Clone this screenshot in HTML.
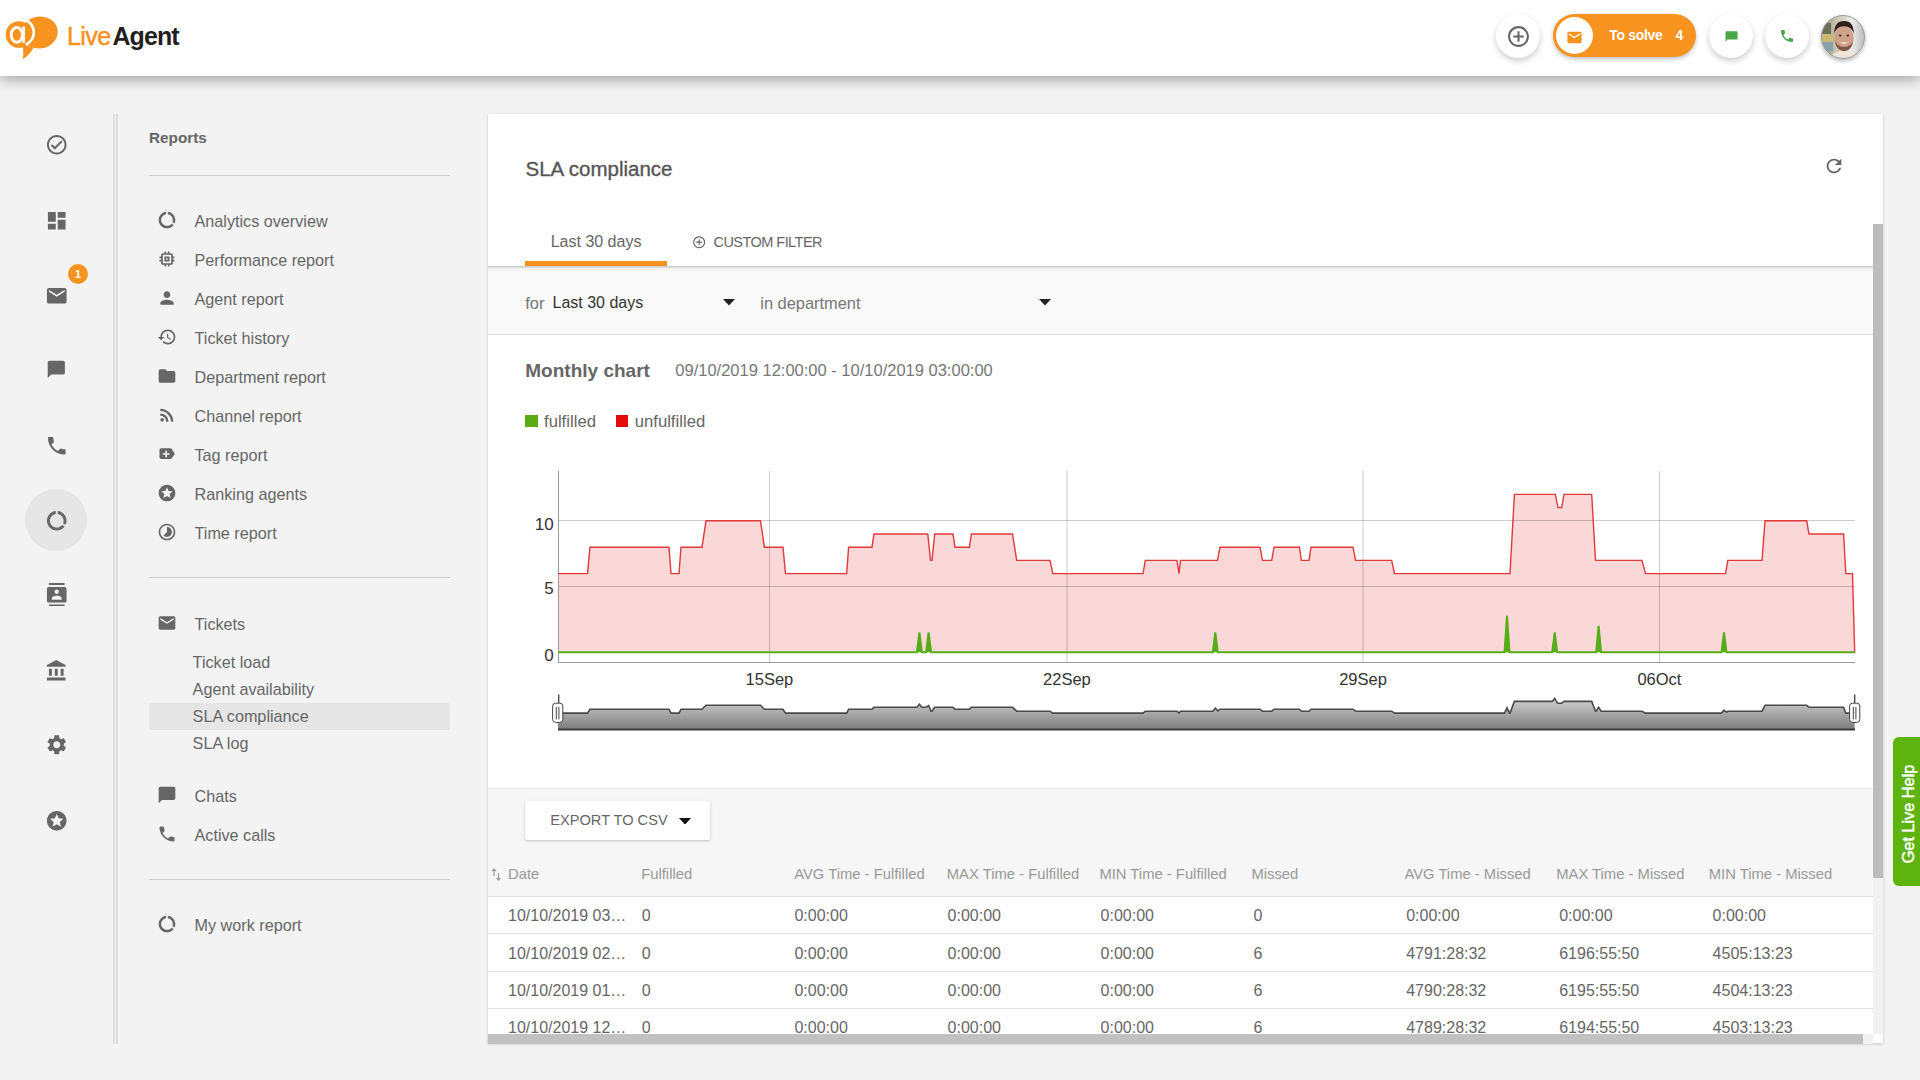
<!DOCTYPE html>
<html><head><meta charset="utf-8">
<style>
*{box-sizing:border-box;margin:0;padding:0}
html,body{width:1920px;height:1080px;overflow:hidden}
body{background:#f3f3f3;font-family:"Liberation Sans",sans-serif;color:#666;position:relative}
.abs{position:absolute}
svg.i{position:absolute;fill:#666}
#hdr{position:absolute;left:0;top:0;width:1920px;height:76px;background:#fff;box-shadow:0 4px 13px rgba(0,0,0,.32);z-index:5}
.cbtn{position:absolute;width:44px;height:44px;border-radius:50%;background:#fff;box-shadow:0 3px 6px rgba(0,0,0,.2)}
#rail svg{position:absolute;fill:#666}
.divl{position:absolute;left:113px;top:114px;width:5px;height:930px;border-left:2px solid #dcdcdc;border-right:2px solid #dcdcdc}
.side{position:absolute;font-size:16.2px;line-height:1;color:#666;white-space:nowrap}
.hr{position:absolute;left:149px;width:301px;height:1px;background:#cfcfcf}
#card{position:absolute;left:488px;top:114px;width:1395px;height:929px;background:#fff;box-shadow:0 1px 3px rgba(0,0,0,.2)}
.t{position:absolute;white-space:nowrap}
.th{position:absolute;top:866.5px;font-size:14.8px;line-height:1;color:#999;white-space:nowrap}
.td{position:absolute;font-size:16px;line-height:1;color:#666;white-space:nowrap}
</style></head><body>

<div id="hdr">
  <svg class="abs" style="left:0;top:0" width="64" height="64" viewBox="0 0 64 64">
    <ellipse cx="39.5" cy="32.5" rx="18.3" ry="16" transform="rotate(-8 39.5 32.5)" fill="#f7931e"/>
    <path d="M22 44 Q24.5 53 22.5 59.5 Q30 55 33.5 47.5 Z" fill="#f7931e"/>
    <circle cx="19" cy="34.5" r="13.3" fill="#f7931e"/>
    <path d="M21 18.8 A13.6 13.6 0 0 1 25.8 44.8" fill="none" stroke="#fff" stroke-width="2.6"/>
    <ellipse cx="16.8" cy="34.8" rx="5.6" ry="7.4" fill="none" stroke="#fff" stroke-width="2.9"/>
    <path d="M23.6 26.5 V43" stroke="#fff" stroke-width="2.6"/>
  </svg>
  <div class="t" style="left:67px;top:22px;font-size:25px;line-height:normal"><span style="color:#f7931e;-webkit-text-stroke:0.5px #f7931e;letter-spacing:-0.6px">Live</span><span style="color:#231f20;font-weight:bold;letter-spacing:-0.9px;margin-left:2px">Agent</span></div>

  <div class="cbtn" style="left:1496px;top:14px"></div>
  <svg class="i" style="left:1505.7px;top:23.8px" width="25" height="25" viewBox="0 0 24 24"><path d="M13 7h-2v4H7v2h4v4h2v-4h4v-2h-4V7zm-1-5C6.48 2 2 6.48 2 12s4.48 10 10 10 10-4.48 10-10S17.52 2 12 2zm0 18c-4.41 0-8-3.59-8-8s3.59-8 8-8 8 3.59 8 8-3.59 8-8 8z"/></svg>

  <div class="abs" style="left:1553px;top:14px;width:143px;height:43px;border-radius:22px;background:#f7931e;box-shadow:0 2px 4px rgba(0,0,0,.25)"></div>
  <div class="abs" style="left:1556px;top:17px;width:37px;height:37px;border-radius:50%;background:#fff"></div>
  <svg class="i" style="left:1566.2px;top:28.7px;fill:#f7931e" width="17" height="17" viewBox="0 0 24 24"><path d="M20 4H4c-1.1 0-1.99.9-1.99 2L2 18c0 1.1.9 2 2 2h16c1.1 0 2-.9 2-2V6c0-1.1-.9-2-2-2zm0 4l-8 5-8-5V6l8 5 8-5v2z"/></svg>
  <div class="t" style="left:1609.2px;top:27.5px;font-size:14px;line-height:1;font-weight:bold;color:#fff;letter-spacing:-0.3px">To solve</div><div class="t" style="left:1675.6px;top:27.5px;font-size:14px;line-height:1;font-weight:bold;color:#fff">4</div>

  <div class="cbtn" style="left:1709px;top:14px"></div>
  <svg class="abs" style="left:1724.5px;top:30.5px" width="13" height="11" viewBox="0 0 13 11"><path d="M0.5 1.2Q0.5 0.3 1.4 0.3H11.8Q12.6 0.3 12.6 1.2V7.6Q12.6 8.5 11.8 8.5H2.6L0.5 10.7Z" fill="#46a84a"/></svg>
  <div class="cbtn" style="left:1765px;top:14px"></div>
  <svg class="i" style="left:1779px;top:28px;fill:#46a84a" width="16" height="16" viewBox="0 0 24 24"><path d="M6.62 10.79c1.44 2.83 3.76 5.14 6.59 6.59l2.2-2.2c.27-.27.67-.36 1.02-.24 1.12.37 2.33.57 3.57.57.55 0 1 .45 1 1V20c0 .55-.45 1-1 1-9.39 0-17-7.61-17-17 0-.55.45-1 1-1h3.5c.55 0 1 .45 1 1 0 1.25.2 2.45.57 3.57.11.35.03.74-.25 1.02l-2.2 2.2z"/></svg>
  <div class="abs" style="left:1821px;top:14.8px;width:44px;height:44px;border-radius:50%;box-shadow:0 2px 4px rgba(0,0,0,.3)"></div>
  <svg class="abs" style="left:1821px;top:14.8px" width="44" height="44" viewBox="0 0 44 44">
    <defs><clipPath id="avc"><circle cx="22" cy="22" r="21.5"/></clipPath>
    <linearGradient id="avbg" x1="0" y1="0" x2="1" y2="0"><stop offset="0" stop-color="#8c8a6a"/><stop offset="0.35" stop-color="#c9c5b0"/><stop offset="0.7" stop-color="#ececea"/><stop offset="1" stop-color="#b9b9b9"/></linearGradient></defs>
    <g clip-path="url(#avc)">
      <rect width="44" height="44" fill="url(#avbg)"/>
      <rect x="0" y="8" width="10" height="12" fill="#6b6f58"/>
      <rect x="1" y="19" width="11" height="9" fill="#c8b96e"/>
      <rect x="0" y="27" width="12" height="9" fill="#8aa0ad"/>
      <path d="M8 44 Q11 36 23 35.5 Q34 36 37 44Z" fill="#ede6d8"/>
      <ellipse cx="23" cy="23.5" rx="9.6" ry="12.8" fill="#d0a088"/>
      <path d="M13.2 19 Q13 6 23 6 Q33 6 32.8 19 Q31 11.5 23 11.2 Q15 11.5 13.2 19Z" fill="#2e211a"/>
      <path d="M13.8 25 Q15 35.8 23 36.3 Q31 35.8 32.2 25 Q30.5 31.8 23 32 Q15.5 31.8 13.8 25Z" fill="#7a5646"/>
      <path d="M18.5 27 Q23 30.5 27.5 27 Q23 28.2 18.5 27Z" fill="#fff"/>
      <ellipse cx="19.2" cy="20.5" rx="1.3" ry="0.9" fill="#3b2a20"/><ellipse cx="26.8" cy="20.5" rx="1.3" ry="0.9" fill="#3b2a20"/>
    </g>
    <circle cx="22" cy="22" r="21.5" fill="none" stroke="#9a9a9a" stroke-width="1"/>
  </svg>
</div>

<div id="rail">
  <div class="abs" style="left:25.3px;top:489px;width:62px;height:62px;border-radius:50%;background:#e6e6e6"></div>
  <svg style="left:44.85px;top:133.45px" width="23.5" height="23.5" viewBox="0 0 24 24"><path d="M12 2C6.48 2 2 6.48 2 12s4.48 10 10 10 10-4.48 10-10S17.52 2 12 2zm0 18c-4.41 0-8-3.59-8-8s3.59-8 8-8 8 3.59 8 8-3.59 8-8 8zm4.59-12.42L10 14.17l-2.59-2.58L6 13l4 4 8-8z"/></svg>
  <svg style="left:44.85px;top:208.55px" width="23.5" height="23.5" viewBox="0 0 24 24"><path d="M3 13h8V3H3v10zm0 8h8v-6H3v6zm10 0h8V11h-8v10zm0-18v6h8V3h-8z"/></svg>
  <svg style="left:44.85px;top:283.55px" width="23.5" height="23.5" viewBox="0 0 24 24"><path d="M20 4H4c-1.1 0-1.99.9-1.99 2L2 18c0 1.1.9 2 2 2h16c1.1 0 2-.9 2-2V6c0-1.1-.9-2-2-2zm0 4l-8 5-8-5V6l8 5 8-5v2z"/></svg>
  <div class="abs" style="left:68px;top:264px;width:20px;height:20px;border-radius:50%;background:#f7931e;color:#fff;font-size:11px;font-weight:bold;text-align:center;line-height:20px">1</div>
  <svg style="left:46.2px;top:359px" width="20.6" height="20.6" viewBox="0 0 24 24"><path d="M20 2H4c-1.1 0-1.99.9-1.99 2L2 22l4-4h14c1.1 0 2-.9 2-2V4c0-1.1-.9-2-2-2z"/></svg>
  <svg style="left:44.85px;top:433.55px" width="23.5" height="23.5" viewBox="0 0 24 24"><path d="M6.62 10.79c1.44 2.830 3.76 5.14 6.59 6.59l2.2-2.2c.27-.27.67-.36 1.02-.24 1.12.37 2.33.57 3.57.57.55 0 1 .45 1 1V20c0 .55-.45 1-1 1-9.39 0-17-7.61-17-17 0-.55.45-1 1-1h3.5c.55 0 1 .45 1 1 0 1.25.2 2.45.57 3.57.11.35.03.74-.25 1.02l-2.2 2.2z"/></svg>
  <svg style="left:44.85px;top:508.65px" width="23.5" height="23.5" viewBox="0 0 24 24"><path d="M13 2.05v3.03c3.39.49 6 3.39 6 6.92 0 .9-.18 1.750-.48 2.54l2.6 1.53c.56-1.24.88-2.62.88-4.07 0-5.18-3.95-9.45-9-9.95zM12 19c-3.87 0-7-3.13-7-7 0-3.53 2.61-6.430 6-6.92V2.05c-5.06.5-9 4.76-9 9.95 0 5.52 4.47 10 9.990 10 3.31 0 6.24-1.61 8.06-4.09l-2.6-1.53C16.17 17.98 14.21 19 12 19z"/></svg>
  <svg style="left:44.85px;top:582.55px" width="23.5" height="23.5" viewBox="0 0 24 24"><path d="M20 0H4v2h16V0zM4 24h16v-2H4v2zM20 4H4c-1.1 0-2 .9-2 2v12c0 1.1.9 2 2 2h16c1.1 0 2-.9 2-2V6c0-1.1-.9-2-2-2zm-8 2.75c1.24 0 2.25 1.01 2.25 2.25s-1.01 2.25-2.25 2.25S9.75 10.24 9.75 9 10.76 6.75 12 6.75zM17 17H7v-1.5c0-1.67 3.33-2.5 5-2.5s5 .83 5 2.5V17z"/></svg>
  <svg style="left:44.85px;top:658.65px" width="23.5" height="23.5" viewBox="0 0 24 24"><path d="M4 10v7h3v-7H4zm6 0v7h3v-7h-3zM2 22h19v-3H2v3zm14-12v7h3v-7h-3zm-4.5-9L2 6v2h19V6l-9.5-5z"/></svg>
  <svg style="left:44.85px;top:733.15px" width="23.5" height="23.5" viewBox="0 0 24 24"><path d="M19.14 12.94c.04-.3.06-.61.06-.94 0-.32-.02-.64-.07-.94l2.03-1.58c.18-.14.23-.41.12-.61l-1.92-3.32c-.12-.22-.37-.29-.59-.22l-2.39.96c-.5-.38-1.03-.7-1.62-.94l-.36-2.54c-.04-.24-.24-.41-.48-.41h-3.84c-.24 0-.43.17-.47.41l-.36 2.54c-.59.24-1.13.57-1.62.94l-2.39-.96c-.22-.08-.47 0-.59.22L2.74 8.87c-.12.21-.08.47.12.61l2.03 1.58c-.05.3-.09.63-.09.94s.02.64.07.94l-2.030 1.58c-.18.14-.23.41-.12.61l1.92 3.32c.12.22.37.29.59.22l2.39-.96c.5.38 1.03.7 1.62.94l.36 2.54c.05.24.24.41.48.41h3.84c.24 0 .44-.17.47-.41l.36-2.54c.59-.24 1.13-.56 1.62-.94l2.39.96c.22.08.47 0 .59-.22l1.92-3.32c.12-.22.07-.47-.12-.61l-2.01-1.58zM12 15.6c-1.98 0-3.6-1.62-3.6-3.6s1.62-3.6 3.6-3.6 3.6 1.62 3.6 3.6-1.62 3.6-3.6 3.6z"/></svg>
  <svg style="left:44.85px;top:808.75px" width="23.5" height="23.5" viewBox="0 0 24 24"><path d="M11.99 2C6.47 2 2 6.48 2 12s4.47 10 9.99 10C17.52 22 22 17.520 22 12S17.52 2 11.99 2zm4.24 16L12 15.45 7.77 18l1.12-4.81-3.73-3.23 4.92-.42L12 5l1.92 4.53 4.92.42-3.73 3.23L16.23 18z"/></svg>
</div>
<div class="divl"></div>

<!-- SIDEBAR -->
<div class="side" style="left:149px;top:130.3px;font-weight:bold;font-size:15.3px">Reports</div>
<div class="hr" style="top:175px"></div>
<div class="side" style="left:194.5px;top:213px">Analytics overview</div>
<div class="side" style="left:194.5px;top:251.9px">Performance report</div>
<div class="side" style="left:194.5px;top:290.7px">Agent report</div>
<div class="side" style="left:194.5px;top:329.7px">Ticket history</div>
<div class="side" style="left:194.5px;top:368.7px">Department report</div>
<div class="side" style="left:194.5px;top:407.7px">Channel report</div>
<div class="side" style="left:194.5px;top:446.7px">Tag report</div>
<div class="side" style="left:194.5px;top:485.7px">Ranking agents</div>
<div class="side" style="left:194.5px;top:524.7px">Time report</div>
<svg class="i" style="left:156.5px;top:210.2px" width="20" height="20" viewBox="0 0 24 24"><path d="M13 2.05v3.03c3.39.49 6 3.39 6 6.92 0 .9-.18 1.75-.48 2.54l2.6 1.53c.56-1.24.88-2.62.88-4.07 0-5.18-3.95-9.45-9-9.95zM12 19c-3.87 0-7-3.13-7-7 0-3.53 2.61-6.43 6-6.92V2.05c-5.06.5-9 4.76-9 9.95 0 5.52 4.47 10 9.99 10 3.31 0 6.24-1.61 8.06-4.09l-2.6-1.53C16.17 17.98 14.21 19 12 19z"/></svg>
<svg class="i" style="left:156.5px;top:249.1px" width="20" height="20" viewBox="0 0 24 24"><path d="M15 9H9v6h6V9zm-2 4h-2v-2h2v2zm8-2V9h-2V7c0-1.1-.9-2-2-2h-2V3h-2v2h-2V3H9v2H7c-1.1 0-2 .9-2 2v2H3v2h2v2H3v2h2v2c0 1.1.9 2 2 2h2v2h2v-2h2v2h2v-2h2c1.1 0 2-.9 2-2v-2h2v-2h-2v-2h2zm-4 6H7V7h10v10z"/></svg>
<svg class="i" style="left:156.5px;top:287.9px" width="20" height="20" viewBox="0 0 24 24"><path d="M12 12c2.21 0 4-1.79 4-4s-1.79-4-4-4-4 1.79-4 4 1.79 4 4 4zm0 2c-2.67 0-8 1.34-8 4v2h16v-2c0-2.66-5.33-4-8-4z"/></svg>
<svg class="i" style="left:156.5px;top:326.9px" width="20" height="20" viewBox="0 0 24 24"><path d="M13 3c-4.97 0-9 4.03-9 9H1l3.89 3.89.07.14L9 12H6c0-3.87 3.13-7 7-7s7 3.13 7 7-3.13 7-7 7c-1.93 0-3.68-.79-4.94-2.06l-1.42 1.42C8.27 19.99 10.51 21 13 21c4.97 0 9-4.03 9-9s-4.03-9-9-9zm-1 5v5l4.28 2.54.72-1.21-3.5-2.08V8H12z"/></svg>
<svg class="i" style="left:156.5px;top:365.9px" width="20" height="20" viewBox="0 0 24 24"><path d="M10 4H4c-1.1 0-1.99.9-1.99 2L2 18c0 1.1.9 2 2 2h16c1.1 0 2-.9 2-2V8c0-1.1-.9-2-2-2h-8l-2-2z"/></svg>
<svg class="i" style="left:156.5px;top:404.9px" width="20" height="20" viewBox="0 0 24 24"><path d="M6.18 15.64a2.18 2.18 0 0 1 2.18 2.18C8.36 19 7.38 20 6.18 20 5 20 4 19 4 17.82a2.18 2.18 0 0 1 2.18-2.18M4 4.44A15.56 15.56 0 0 1 19.56 20h-2.83A12.73 12.73 0 0 0 4 7.27V4.44m0 5.66a9.9 9.9 0 0 1 9.9 9.9h-2.83A7.07 7.07 0 0 0 4 12.93V10.1z"/></svg>
<svg class="i" style="left:156.5px;top:443.9px" width="20" height="20" viewBox="0 0 24 24"><path d="M3 7c0-1.1.9-2 2-2h11c.67 0 1.27.33 1.63.84L21.5 12l-3.87 5.16c-.36.51-.96.84-1.63.84H5c-1.1 0-2-.9-2-2V7zm7 1v3H7v2h3v3h2v-3h3v-2h-3V8h-2z"/></svg>
<svg class="i" style="left:156.5px;top:482.9px" width="20" height="20" viewBox="0 0 24 24"><path d="M11.99 2C6.47 2 2 6.48 2 12s4.47 10 9.99 10C17.52 22 22 17.52 22 12S17.52 2 11.99 2zm4.24 16L12 15.45 7.77 18l1.12-4.81-3.73-3.23 4.92-.42L12 5l1.92 4.53 4.92.42-3.73 3.23L16.23 18z"/></svg>
<svg class="i" style="left:156.5px;top:521.9px" width="20" height="20" viewBox="0 0 24 24"><path d="M16.24 7.76C15.07 6.59 13.54 6 12 6v6l-4.24 4.24c2.34 2.34 6.14 2.34 8.49 0 2.34-2.34 2.34-6.14-.01-8.48zM12 2C6.48 2 2 6.48 2 12s4.48 10 10 10 10-4.48 10-10S17.52 2 12 2zm0 18c-4.42 0-8-3.58-8-8s3.58-8 8-8 8 3.58 8 8-3.58 8-8 8z"/></svg>

<div class="hr" style="top:577px"></div>
<div class="side" style="left:194.5px;top:615.9px">Tickets</div>
<svg class="i" style="left:156.5px;top:613.1px" width="20" height="20" viewBox="0 0 24 24"><path d="M20 4H4c-1.1 0-1.99.9-1.99 2L2 18c0 1.1.9 2 2 2h16c1.1 0 2-.9 2-2V6c0-1.1-.9-2-2-2zm0 4l-8 5-8-5V6l8 5 8-5v2z"/></svg>
<div class="abs" style="left:149px;top:702.5px;width:301px;height:27px;background:#e6e6e6;border-radius:2px"></div>
<div class="side" style="left:192.6px;top:654.2px">Ticket load</div>
<div class="side" style="left:192.6px;top:680.8px">Agent availability</div>
<div class="side" style="left:192.6px;top:707.8px">SLA compliance</div>
<div class="side" style="left:192.6px;top:734.9px">SLA log</div>
<div class="side" style="left:194.5px;top:788px">Chats</div>
<svg class="i" style="left:156.5px;top:785.2px" width="20" height="20" viewBox="0 0 24 24"><path d="M20 2H4c-1.1 0-1.99.9-1.99 2L2 22l4-4h14c1.1 0 2-.9 2-2V4c0-1.1-.9-2-2-2z"/></svg>
<div class="side" style="left:194.5px;top:827.1px">Active calls</div>
<svg class="i" style="left:156.5px;top:824.3px" width="20" height="20" viewBox="0 0 24 24"><path d="M6.62 10.79c1.44 2.83 3.76 5.14 6.59 6.59l2.2-2.2c.27-.27.67-.36 1.02-.24 1.12.37 2.33.57 3.57.57.55 0 1 .45 1 1V20c0 .55-.45 1-1 1-9.39 0-17-7.61-17-17 0-.55.45-1 1-1h3.5c.55 0 1 .45 1 1 0 1.25.2 2.45.57 3.57.11.35.03.74-.25 1.02l-2.2 2.2z"/></svg>
<div class="hr" style="top:879px"></div>
<div class="side" style="left:194.5px;top:917.1px">My work report</div>
<svg class="i" style="left:156.5px;top:914.3px" width="20" height="20" viewBox="0 0 24 24"><path d="M13 2.05v3.03c3.39.49 6 3.39 6 6.92 0 .9-.18 1.75-.48 2.54l2.6 1.53c.56-1.24.88-2.62.88-4.07 0-5.18-3.95-9.45-9-9.95zM12 19c-3.870 0-7-3.13-7-7 0-3.53 2.61-6.43 6-6.92V2.05c-5.06.5-9 4.76-9 9.95 0 5.52 4.47 10 9.99 10 3.31 0 6.24-1.61 8.06-4.09l-2.6-1.53C16.17 17.98 14.21 19 12 19z"/></svg>

<!-- CARD -->
<div id="card"></div>
<div class="t" style="left:525.5px;top:158.6px;font-size:20.5px;line-height:1;color:#555;-webkit-text-stroke:0.35px #555">SLA compliance</div>
<svg class="i" style="left:1823px;top:154.5px" width="22" height="22" viewBox="0 0 24 24"><path d="M17.65 6.35C16.2 4.9 14.21 4 12 4c-4.42 0-7.99 3.58-7.99 8s3.57 8 7.99 8c3.73 0 6.84-2.55 7.73-6h-2.08c-.82 2.33-3.04 4-5.65 4-3.31 0-6-2.690-6-6s2.69-6 6-6c1.66 0 3.14.69 4.22 1.78L13 11h7V4l-2.35 2.35z"/></svg>
<!-- tabs -->

<div class="t" style="left:550.7px;top:234px;font-size:16px;line-height:1;z-index:2">Last 30 days</div>
<div class="abs" style="left:525px;top:261px;width:142px;height:5px;background:#f7931e;z-index:2"></div>
<svg class="i" style="left:691.5px;top:235.2px;z-index:2" width="14.4" height="14.4" viewBox="0 0 24 24"><path d="M13 7h-2v4H7v2h4v4h2v-4h4v-2h-4V7zm-1-5C6.48 2 2 6.48 2 12s4.48 10 10 10 10-4.480 10-10S17.52 2 12 2zm0 18c-4.41 0-8-3.59-8-8s3.59-8 8-8 8 3.59 8 8-3.59 8-8 8z"/></svg>
<div class="t" style="left:713.5px;top:234.6px;font-size:14.5px;line-height:1;letter-spacing:-0.54px;z-index:2">CUSTOM FILTER</div>
<!-- filter bar -->
<div class="abs" style="left:488px;top:266px;width:1385px;height:69px;background:#f9f9f9;border-bottom:1px solid #e2e2e2"></div>
<div class="abs" style="left:488px;top:265.5px;width:1385px;height:5px;background:linear-gradient(rgba(0,0,0,.22),rgba(0,0,0,.06) 40%,rgba(0,0,0,0))"></div>
<div class="t" style="left:525.3px;top:294.5px;font-size:16.4px;line-height:1;color:#777">for</div>
<div class="t" style="left:552.5px;top:294.5px;font-size:16px;line-height:1;color:#333">Last 30 days</div>
<svg class="abs" style="left:723px;top:299px" width="12" height="6.5" viewBox="0 0 12 6.5"><path d="M0 0h12L6 6.5z" fill="#222"/></svg>
<div class="t" style="left:760.3px;top:294.5px;font-size:16.4px;line-height:1;color:#777">in department</div>
<svg class="abs" style="left:1039.4px;top:299px" width="12" height="6.5" viewBox="0 0 12 6.5"><path d="M0 0h12L6 6.5z" fill="#222"/></svg>
<!-- chart header -->
<div class="t" style="left:525.3px;top:361.1px;font-size:19px;line-height:1;font-weight:bold;color:#666">Monthly chart</div>
<div class="t" style="left:675.3px;top:361.6px;font-size:16.5px;line-height:1;color:#777">09/10/2019 12:00:00 - 10/10/2019 03:00:00</div>
<div class="abs" style="left:525.3px;top:414.7px;width:12.5px;height:12px;background:#5aaa10"></div>
<div class="t" style="left:544px;top:414px;font-size:16.7px;line-height:1;color:#666">fulfilled</div>
<div class="abs" style="left:616px;top:414.7px;width:12px;height:12px;background:#e30b0b"></div>
<div class="t" style="left:634.7px;top:414px;font-size:16.7px;line-height:1;color:#666">unfulfilled</div>
<!-- axis labels -->
<div class="t" style="left:500px;width:53.7px;text-align:right;top:515.6px;font-size:17px;line-height:1;color:#333">10</div>
<div class="t" style="left:500px;width:53.7px;text-align:right;top:580.4px;font-size:17px;line-height:1;color:#333">5</div>
<div class="t" style="left:500px;width:53.7px;text-align:right;top:646.6px;font-size:17px;line-height:1;color:#333">0</div>
<div class="t" style="left:719.4px;width:100px;text-align:center;top:671px;font-size:16.5px;line-height:1;color:#333">15Sep</div>
<div class="t" style="left:1016.9px;width:100px;text-align:center;top:671px;font-size:16.5px;line-height:1;color:#333">22Sep</div>
<div class="t" style="left:1313px;width:100px;text-align:center;top:671px;font-size:16.5px;line-height:1;color:#333">29Sep</div>
<div class="t" style="left:1609.4px;width:100px;text-align:center;top:671px;font-size:16.5px;line-height:1;color:#333">06Oct</div>
<!-- export + table -->
<div class="abs" style="left:488px;top:788px;width:1385px;height:109px;background:#f6f6f6;border-top:1px solid #e4e4e4;border-bottom:1px solid #e2e2e2"></div>
<div class="abs" style="left:525px;top:801px;width:185px;height:39px;background:#fff;border-radius:2px;box-shadow:0 1px 3px rgba(0,0,0,.22)"></div>
<div class="t" style="left:550.3px;top:813.4px;font-size:14.6px;line-height:1;color:#666">EXPORT TO CSV</div>
<svg class="abs" style="left:678.8px;top:817.5px" width="12" height="6.7" viewBox="0 0 12 6.5"><path d="M0 0h12L6 6.5z" fill="#111"/></svg>
<svg class="abs" style="left:491px;top:867px" width="11" height="15" viewBox="0 0 11 15"><path d="M3 2v7M1 4l2-2 2 2M7.5 6v7M5.5 11l2 2 2-2" stroke="#999" stroke-width="1.2" fill="none"/></svg>
<div class="th" style="left:508px">Date</div>
<div class="th" style="left:641.2px">Fulfilled</div>
<div class="th" style="left:794.2px">AVG Time - Fulfilled</div>
<div class="th" style="left:946.8px">MAX Time - Fulfilled</div>
<div class="th" style="left:1099.4px">MIN Time - Fulfilled</div>
<div class="th" style="left:1251.4px">Missed</div>
<div class="th" style="left:1404.4px">AVG Time - Missed</div>
<div class="th" style="left:1556.2px">MAX Time - Missed</div>
<div class="th" style="left:1708.8px">MIN Time - Missed</div>
<div class="abs" style="left:488px;top:933px;width:1385px;height:1px;background:#e4e4e4"></div>
<div class="abs" style="left:488px;top:970.7px;width:1385px;height:1px;background:#e4e4e4"></div>
<div class="abs" style="left:488px;top:1007.7px;width:1385px;height:1px;background:#e4e4e4"></div>
<div style="position:absolute;left:0;top:0;width:1920px;height:1034px;overflow:hidden"><div class="td" style="left:508px;top:908.1px">10/10/2019 03…</div>
<div class="td" style="left:641.7px;top:908.1px">0</div>
<div class="td" style="left:794.4px;top:908.1px">0:00:00</div>
<div class="td" style="left:947.6px;top:908.1px">0:00:00</div>
<div class="td" style="left:1100.6px;top:908.1px">0:00:00</div>
<div class="td" style="left:1253.6px;top:908.1px">0</div>
<div class="td" style="left:1406.2px;top:908.1px">0:00:00</div>
<div class="td" style="left:1559.2px;top:908.1px">0:00:00</div>
<div class="td" style="left:1712.6px;top:908.1px">0:00:00</div>
<div class="td" style="left:508px;top:945.5px">10/10/2019 02…</div>
<div class="td" style="left:641.7px;top:945.5px">0</div>
<div class="td" style="left:794.4px;top:945.5px">0:00:00</div>
<div class="td" style="left:947.6px;top:945.5px">0:00:00</div>
<div class="td" style="left:1100.6px;top:945.5px">0:00:00</div>
<div class="td" style="left:1253.6px;top:945.5px">6</div>
<div class="td" style="left:1406.2px;top:945.5px">4791:28:32</div>
<div class="td" style="left:1559.2px;top:945.5px">6196:55:50</div>
<div class="td" style="left:1712.6px;top:945.5px">4505:13:23</div>
<div class="td" style="left:508px;top:983.1px">10/10/2019 01…</div>
<div class="td" style="left:641.7px;top:983.1px">0</div>
<div class="td" style="left:794.4px;top:983.1px">0:00:00</div>
<div class="td" style="left:947.6px;top:983.1px">0:00:00</div>
<div class="td" style="left:1100.6px;top:983.1px">0:00:00</div>
<div class="td" style="left:1253.6px;top:983.1px">6</div>
<div class="td" style="left:1406.2px;top:983.1px">4790:28:32</div>
<div class="td" style="left:1559.2px;top:983.1px">6195:55:50</div>
<div class="td" style="left:1712.6px;top:983.1px">4504:13:23</div>
<div class="td" style="left:508px;top:1019.8px">10/10/2019 12…</div>
<div class="td" style="left:641.7px;top:1019.8px">0</div>
<div class="td" style="left:794.4px;top:1019.8px">0:00:00</div>
<div class="td" style="left:947.6px;top:1019.8px">0:00:00</div>
<div class="td" style="left:1100.6px;top:1019.8px">0:00:00</div>
<div class="td" style="left:1253.6px;top:1019.8px">6</div>
<div class="td" style="left:1406.2px;top:1019.8px">4789:28:32</div>
<div class="td" style="left:1559.2px;top:1019.8px">6194:55:50</div>
<div class="td" style="left:1712.6px;top:1019.8px">4503:13:23</div></div>
<div class="abs" style="left:488px;top:1034px;width:1375px;height:9.5px;background:#c1c1c1"></div>
<div class="abs" style="left:1863px;top:1034px;width:10px;height:9.5px;background:#f0f0f0"></div>
<div class="abs" style="left:1873px;top:224px;width:10px;height:810px;background:#f1f1f1"></div>
<div class="abs" style="left:1873px;top:224px;width:10px;height:653.5px;background:#bcbcbc"></div>
<!-- live help -->
<div class="abs" style="left:1893px;top:737px;width:30px;height:149px;background:#5fb30e;border-radius:6px 0 0 6px"></div>
<div class="t" style="left:1908px;top:813.5px;transform:translate(-50%,-50%) rotate(-90deg);font-size:16.3px;line-height:1;color:#fff;-webkit-text-stroke:0.45px #fff">Get Live Help</div>

<svg class="abs" style="left:0;top:0" width="1920" height="1080" viewBox="0 0 1920 1080">
  <path d="M558 573.6 L587.5 573.6 L590 547.2 L669 547.2 L671 573.6 L679 573.6 L681 547.2 L702 547.2 L706 520.8 L760.5 520.8 L764.4 547.2 L783 547.2 L785.5 573.6 L846.7 573.6 L848.6 547.2 L872 547.2 L874 534 L927.8 534 L930.5 560.4 L932 560.4 L934.7 534 L953 534 L955 547.2 L969.4 547.2 L971.4 534 L1012.5 534 L1016.7 560.4 L1050 560.4 L1052.8 573.6 L1143 573.6 L1145.3 560.4 L1177 560.4 L1179 573.6 L1180.5 560.4 L1217.5 560.4 L1220 547.2 L1260 547.2 L1262.5 560.4 L1271.7 560.4 L1274 547.2 L1299.4 547.2 L1301.4 560.4 L1309 560.4 L1311 547.2 L1353 547.2 L1355.6 560.4 L1391.7 560.4 L1394.4 573.6 L1510 573.6 L1514.4 494.4 L1555.3 494.4 L1558 507.6 L1561.7 507.6 L1564 494.4 L1591.7 494.4 L1595.5 560.4 L1642 560.4 L1645.5 573.6 L1725.5 573.6 L1727.8 560.4 L1762 560.4 L1765 520.8 L1806.7 520.8 L1809 534 L1843.6 534 L1845.8 573.6 L1852.5 573.6 L1854.7 652.7 L1854.7 652.2 L558 652.2 Z" fill="#fad8d8"/>
  <g stroke="rgba(0,0,0,.2)" stroke-width="1">
   <path d="M558.5 520.5H1855M558.5 586.5H1855M769.5 471V662.5M1067 471V662.5M1363 471V662.5M1659.5 471V662.5"/>
  </g>
  <path d="M558.5 471V663M558.5 662.5H1855" stroke="#9a9a9a" stroke-width="1" fill="none"/>
  <path d="M558 573.6 L587.5 573.6 L590 547.2 L669 547.2 L671 573.6 L679 573.6 L681 547.2 L702 547.2 L706 520.8 L760.5 520.8 L764.4 547.2 L783 547.2 L785.5 573.6 L846.7 573.6 L848.6 547.2 L872 547.2 L874 534 L927.8 534 L930.5 560.4 L932 560.4 L934.7 534 L953 534 L955 547.2 L969.4 547.2 L971.4 534 L1012.5 534 L1016.7 560.4 L1050 560.4 L1052.8 573.6 L1143 573.6 L1145.3 560.4 L1177 560.4 L1179 573.6 L1180.5 560.4 L1217.5 560.4 L1220 547.2 L1260 547.2 L1262.5 560.4 L1271.7 560.4 L1274 547.2 L1299.4 547.2 L1301.4 560.4 L1309 560.4 L1311 547.2 L1353 547.2 L1355.6 560.4 L1391.7 560.4 L1394.4 573.6 L1510 573.6 L1514.4 494.4 L1555.3 494.4 L1558 507.6 L1561.7 507.6 L1564 494.4 L1591.7 494.4 L1595.5 560.4 L1642 560.4 L1645.5 573.6 L1725.5 573.6 L1727.8 560.4 L1762 560.4 L1765 520.8 L1806.7 520.8 L1809 534 L1843.6 534 L1845.8 573.6 L1852.5 573.6 L1854.7 652.7" fill="none" stroke="#e0383b" stroke-width="1.4"/>
  <path d="M558 652.2 L916.9 652.2 L919.4 632.4 L921.9 652.2 L926.1 652.2 L928.6 632.4 L931.1 652.2 L1212.8 652.2 L1215.3 632.4 L1217.8 652.2 L1504.5 652.2 L1507 615.9 L1509.5 652.2 L1552.2 652.2 L1554.7 632.4 L1557.2 652.2 L1596.1 652.2 L1598.6 625.8 L1601.1 652.2 L1721.5 652.2 L1724 632.4 L1726.5 652.2 L1854.7 652.2" fill="#56ad18" stroke="#56ad18" stroke-width="2"/>
  <defs><linearGradient id="ng" x1="0" y1="0" x2="0" y2="1"><stop offset="0" stop-color="#d2d2d2"/><stop offset="1" stop-color="#7d7d7d"/></linearGradient></defs>
  <path d="M558 713.1 L587.5 713.1 L590 709.2 L669 709.2 L671 713.1 L679 713.1 L681 709.2 L702 709.2 L706 705.3 L760.5 705.3 L764.4 709.2 L783 709.2 L785.5 713.1 L846.7 713.1 L848.6 709.2 L872 709.2 L874 707.3 L916.9 707.3 L919.4 704.3 L921.9 707.3 L926.1 707.3 L928.6 705.5 L931.1 711.2 L932 711.2 L934.7 707.3 L953 707.3 L955 709.2 L969.4 709.2 L971.4 707.3 L1012.5 707.3 L1016.7 711.2 L1050 711.2 L1052.8 713.1 L1143 713.1 L1145.3 711.2 L1177 711.2 L1179 713.1 L1180.5 711.2 L1212.8 711.2 L1215.3 708.2 L1217.8 710.9 L1220 709.2 L1260 709.2 L1262.5 711.2 L1271.7 711.2 L1274 709.2 L1299.4 709.2 L1301.4 711.2 L1309 711.2 L1311 709.2 L1353 709.2 L1355.6 711.2 L1391.7 711.2 L1394.4 713.1 L1504.5 713.1 L1507 707.8 L1509.5 713.1 L1510 713.1 L1514.4 701.4 L1552.2 701.4 L1554.7 698.4 L1557.2 702.8 L1558 703.3 L1561.7 703.3 L1564 701.4 L1591.7 701.4 L1595.5 711.2 L1596.1 711.2 L1598.6 707.3 L1601.1 711.2 L1642 711.2 L1645.5 713.1 L1721.5 713.1 L1724 710.2 L1726.5 712.3 L1727.8 711.2 L1762 711.2 L1765 705.3 L1806.7 705.3 L1809 707.3 L1843.6 707.3 L1845.8 713.1 L1852.5 713.1 L1852.5 713.1 L1854.7 719 L1854.7 729 L558 729 Z" fill="url(#ng)"/>
  <path d="M558 713.1 L587.5 713.1 L590 709.2 L669 709.2 L671 713.1 L679 713.1 L681 709.2 L702 709.2 L706 705.3 L760.5 705.3 L764.4 709.2 L783 709.2 L785.5 713.1 L846.7 713.1 L848.6 709.2 L872 709.2 L874 707.3 L916.9 707.3 L919.4 704.3 L921.9 707.3 L926.1 707.3 L928.6 705.5 L931.1 711.2 L932 711.2 L934.7 707.3 L953 707.3 L955 709.2 L969.4 709.2 L971.4 707.3 L1012.5 707.3 L1016.7 711.2 L1050 711.2 L1052.8 713.1 L1143 713.1 L1145.3 711.2 L1177 711.2 L1179 713.1 L1180.5 711.2 L1212.8 711.2 L1215.3 708.2 L1217.8 710.9 L1220 709.2 L1260 709.2 L1262.5 711.2 L1271.7 711.2 L1274 709.2 L1299.4 709.2 L1301.4 711.2 L1309 711.2 L1311 709.2 L1353 709.2 L1355.6 711.2 L1391.7 711.2 L1394.4 713.1 L1504.5 713.1 L1507 707.8 L1509.5 713.1 L1510 713.1 L1514.4 701.4 L1552.2 701.4 L1554.7 698.4 L1557.2 702.8 L1558 703.3 L1561.7 703.3 L1564 701.4 L1591.7 701.4 L1595.5 711.2 L1596.1 711.2 L1598.6 707.3 L1601.1 711.2 L1642 711.2 L1645.5 713.1 L1721.5 713.1 L1724 710.2 L1726.5 712.3 L1727.8 711.2 L1762 711.2 L1765 705.3 L1806.7 705.3 L1809 707.3 L1843.6 707.3 L1845.8 713.1 L1852.5 713.1 L1852.5 713.1 L1854.7 719" fill="none" stroke="#4a4a4a" stroke-width="1.6"/>
  <path d="M558 729.5H1855" stroke="#3a3a3a" stroke-width="2"/>
  <path d="M558.75 694.5V703M1854.75 694.5V703" stroke="#333" stroke-width="1.2"/>
  <rect x="552.6" y="703.2" width="10.2" height="19.2" rx="3" fill="#fff" stroke="#444" stroke-width="1"/>
  <path d="M556.3 707V719.4M558.9 707V719.4" stroke="#444" stroke-width="1"/>
  <rect x="1849.6" y="703.2" width="10.2" height="19.2" rx="3" fill="#fff" stroke="#444" stroke-width="1"/>
  <path d="M1853.3 707V719.4M1855.9 707V719.4" stroke="#444" stroke-width="1"/>

</svg>

</body></html>
